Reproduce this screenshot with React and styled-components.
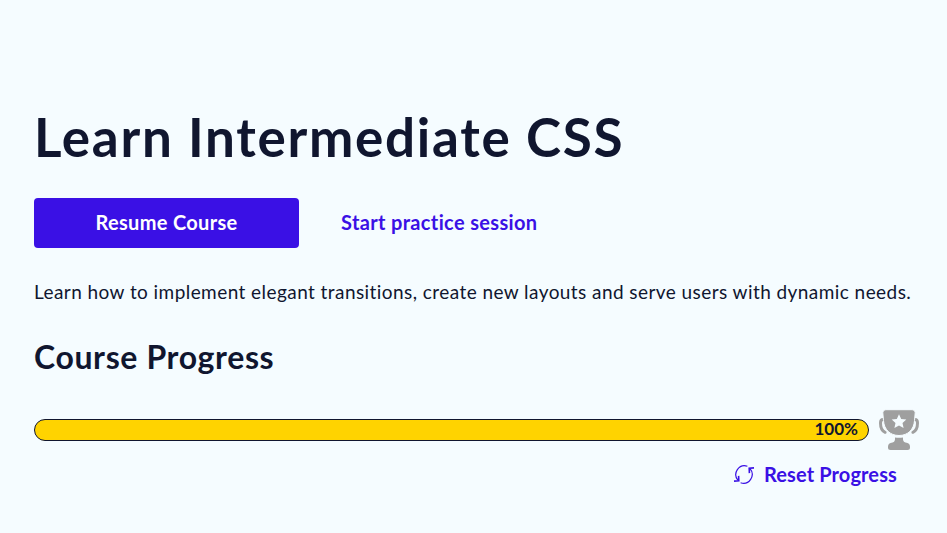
import React from "react";
import styled, { createGlobalStyle } from "styled-components";

const GlobalStyle = createGlobalStyle`
  * { box-sizing: border-box; }
  body {
    margin: 0;
    background: #f5fcff;
    color: #10162f;
    font-family: "Lato", "Open Sans", sans-serif;
  }
`;

const Page = styled.main`
  min-height: 533px;
  padding: 105px 28px 0 34px;
  white-space: nowrap;
`;

const Title = styled.h1`
  margin: 0;
  font-size: 53px;
  line-height: 64px;
  font-weight: 700;
  letter-spacing: 1.7px;
`;

const Actions = styled.div`
  display: flex;
  align-items: center;
  margin-top: 29px;
  gap: 42px;
`;

const PrimaryButton = styled.button`
  width: 265px;
  height: 50px;
  padding: 0 0 3px;
  border: 0;
  border-radius: 4px;
  background: #3a10e5;
  color: #fff;
  font: 700 20px "Lato", sans-serif;
  letter-spacing: 0.33px;
`;

const TextButton = styled.button`
  display: flex;
  align-items: center;
  gap: 9px;
  padding: 0 0 3px;
  border: 0;
  background: none;
  color: #3a10e5;
  font: 700 20px/24px "Lato", sans-serif;
  letter-spacing: ${(p) => p.$spacing};
`;

const Description = styled.p`
  margin: 30px 0 0;
  font-size: 19px;
  line-height: 28px;
  letter-spacing: 0.434px;
`;

const SectionTitle = styled.h2`
  margin: 31px 0 0;
  font-size: 32px;
  line-height: 40px;
  font-weight: 700;
  letter-spacing: 0.62px;
`;

const ProgressRow = styled.div`
  display: flex;
  align-items: center;
  gap: 10px;
  margin-top: 32px;
  height: 42px;
`;

const ProgressBar = styled.div`
  display: flex;
  align-items: center;
  justify-content: flex-end;
  width: 835px;
  height: 22px;
  padding: 0 10px 2px 0;
  border: 1px solid #10162f;
  border-radius: 11px;
  background: #ffd300;
  font-size: 17px;
  line-height: 18px;
  font-weight: 700;
`;

const ResetRow = styled.div`
  display: flex;
  justify-content: flex-end;
  padding-right: 22px;
  margin-top: 11px;
`;

const Trophy = () => (
  <svg width="40" height="42" viewBox="0 0 40 42" fill="none">
    <path
      d="M4 10.600C2.200 10.600 1.500 12 1.500 14c0 5 1.500 8 4.600 9.300M36 10.600c1.800 0 2.500 1.400 2.500 3.400 0 5-1.500 8-4.600 9.300"
      stroke="#9f9f9f"
      strokeWidth="3"
      strokeLinecap="round"
    />
    <path
      d="M6.800.7h26.400q3 0 3 3l-.7 8C34.800 20.500 29 26.500 20 26.500S5.200 20.500 4.500 11.700l-.7-8q0-3 3-3Z"
      fill="#9f9f9f"
      stroke="#f5fcff"
      strokeWidth="1"
    />
    <path
      d="m20 5.200 2.200 4.700 5.100.5-3.800 3.500 1.100 5-4.600-2.500-4.600 2.500 1.100-5-3.800-3.500 5.100-.5Z"
      fill="#f5fcff"
    />
    <path
      d="M16 28.400q4 .8 8 0-.4 4.400 2.500 5.100 4.500.3 4.500 4.300v.7q0 2.500-2.500 2.500h-17Q9 41 9 38.500v-.7q0-4 4.500-4.300 2.900-.7 2.500-5.100Z"
      fill="#9f9f9f"
    />
  </svg>
);

const ResetIcon = () => (
  <svg width="22" height="22" viewBox="0 0 22 22" fill="none" stroke="#3a10e5" strokeWidth="1.2">
    <path d="M14.400 3.200A8.800 8.800 0 0 0 5 17.300M7.600 19.800A8.800 8.800 0 0 0 17 5.700" />
    <path d="M21 4.900 16.200 5.200l.2 4.900M1 18.100l4.800-.3-.2-4.900" strokeWidth="1.6" />
  </svg>
);

export default function App() {
  return (
    <>
      <GlobalStyle />
      <Page>
        <Title>Learn Intermediate CSS</Title>
        <Actions>
          <PrimaryButton>Resume Course</PrimaryButton>
          <TextButton $spacing="0.35px">Start practice session</TextButton>
        </Actions>
        <Description>
          Learn how to implement elegant transitions, create new layouts and serve users with dynamic needs.
        </Description>
        <SectionTitle>Course Progress</SectionTitle>
        <ProgressRow>
          <ProgressBar>100%</ProgressBar>
          <Trophy />
        </ProgressRow>
        <ResetRow>
          <TextButton $spacing="0.12px">
            <ResetIcon />
            Reset Progress
          </TextButton>
        </ResetRow>
      </Page>
    </>
  );
}
